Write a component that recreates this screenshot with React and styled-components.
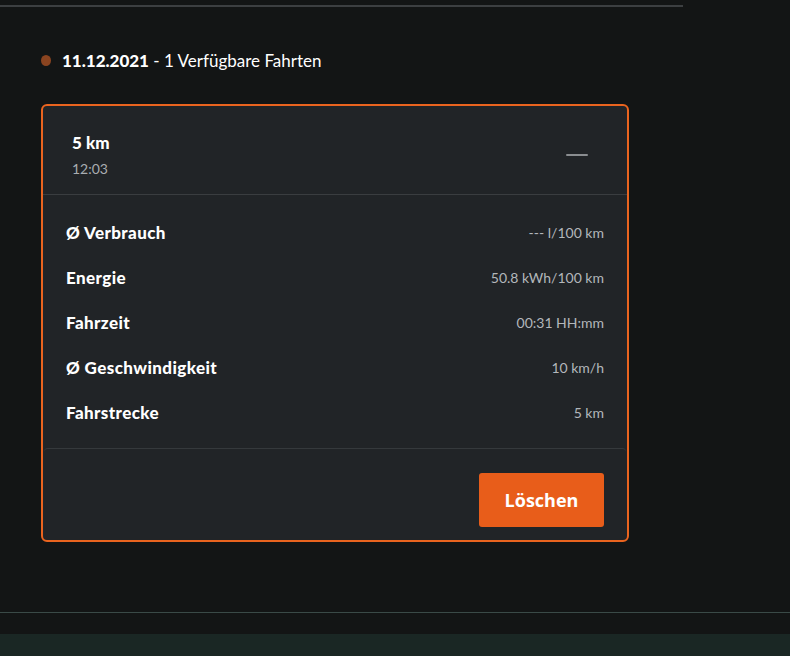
import React from 'react';
import styled, { createGlobalStyle } from 'styled-components';

const GlobalStyle = createGlobalStyle`
  html, body {
    margin: 0;
    padding: 0;
    background: #131515;
  }
  body {
    font-family: 'Lato', 'Open Sans', sans-serif;
    color: #ffffff;
  }
`;

const Page = styled.div`
  width: 790px;
  height: 656px;
  display: flex;
  flex-direction: column;
  background: #131515;
  overflow: hidden;
`;

const TopRule = styled.div`
  width: 683px;
  height: 2px;
  margin-top: 5px;
  background: #3c3f41;
`;

const Content = styled.section`
  padding: 0 0 0 41px;
  flex: 1;
`;

const DateLine = styled.div`
  display: flex;
  align-items: center;
  gap: 11px;
  margin-top: 43px;
  height: 20px;
  font-size: 17px;
  color: #ffffff;

  strong {
    font-weight: 900;
  }
`;

const Dot = styled.span`
  width: 10px;
  height: 11px;
  border-radius: 50%;
  background: #8a4420;
  flex-shrink: 0;
`;

const Card = styled.div`
  margin-top: 34px;
  width: 584px;
  border: 2px solid #ea641f;
  border-radius: 6px;
  background: #212427;
  display: flex;
  flex-direction: column;
`;

const CardHeader = styled.div`
  display: flex;
  align-items: center;
  justify-content: space-between;
  height: 89px;
  box-sizing: border-box;
  padding: 9px 39px 0 29px;
  border-bottom: 1px solid #3a3d40;
`;

const Title = styled.div`
  display: flex;
  flex-direction: column;
  gap: 7px;
`;

const Distance = styled.span`
  font-size: 17px;
  font-weight: 900;
  color: #ffffff;
`;

const Time = styled.span`
  font-size: 14px;
  color: #a9adb1;
`;

const Collapse = styled.span`
  width: 22px;
  height: 2px;
  background: #8a8d90;
  border-radius: 1px;
`;

const Body = styled.div`
  display: flex;
  flex-direction: column;
  padding: 15px 23px 13px 23px;
`;

const Row = styled.div`
  display: flex;
  align-items: center;
  justify-content: space-between;
  height: 45px;
`;

const Label = styled.span`
  font-size: 17px;
  font-weight: 900;
  letter-spacing: 0.4px;
  color: #ffffff;
`;

const Value = styled.span`
  font-size: 14px;
  color: #b3b7bb;
`;

const Footer = styled.div`
  display: flex;
  justify-content: flex-end;
  margin: 0 1px;
  padding: 24px 22px 13px;
  border-top: 1px solid #35393c;
  border-radius: 4px 4px 0 0;
`;

const DeleteButton = styled.button`
  width: 125px;
  height: 54px;
  border: none;
  border-radius: 3px;
  background: #e85d1a;
  color: #ffffff;
  font-family: 'Open Sans', sans-serif;
  font-size: 18px;
  font-weight: 700;
  cursor: pointer;
`;

const BottomRule = styled.div`
  height: 1px;
  background: #3a4a47;
  margin-bottom: 21px;
`;

const FooterBand = styled.div`
  height: 22px;
  background: #1a2724;
`;

const rows = [
  ['Ø Verbrauch', '--- l/100 km'],
  ['Energie', '50.8 kWh/100 km'],
  ['Fahrzeit', '00:31 HH:mm'],
  ['Ø Geschwindigkeit', '10 km/h'],
  ['Fahrstrecke', '5 km'],
];

const App = () => {
  return (
    <Page>
      <GlobalStyle />
      <TopRule />
      <Content>
        <DateLine>
          <Dot />
          <span>
            <strong>11.12.2021</strong> - 1 Verfügbare Fahrten
          </span>
        </DateLine>

        <Card>
          <CardHeader>
            <Title>
              <Distance>5 km</Distance>
              <Time>12:03</Time>
            </Title>
            <Collapse />
          </CardHeader>

          <Body>
            {rows.map(([label, value]) => (
              <Row key={label}>
                <Label>{label}</Label>
                <Value>{value}</Value>
              </Row>
            ))}
          </Body>

          <Footer>
            <DeleteButton>Löschen</DeleteButton>
          </Footer>
        </Card>
      </Content>
      <BottomRule />
      <FooterBand />
    </Page>
  );
};

export default App;
